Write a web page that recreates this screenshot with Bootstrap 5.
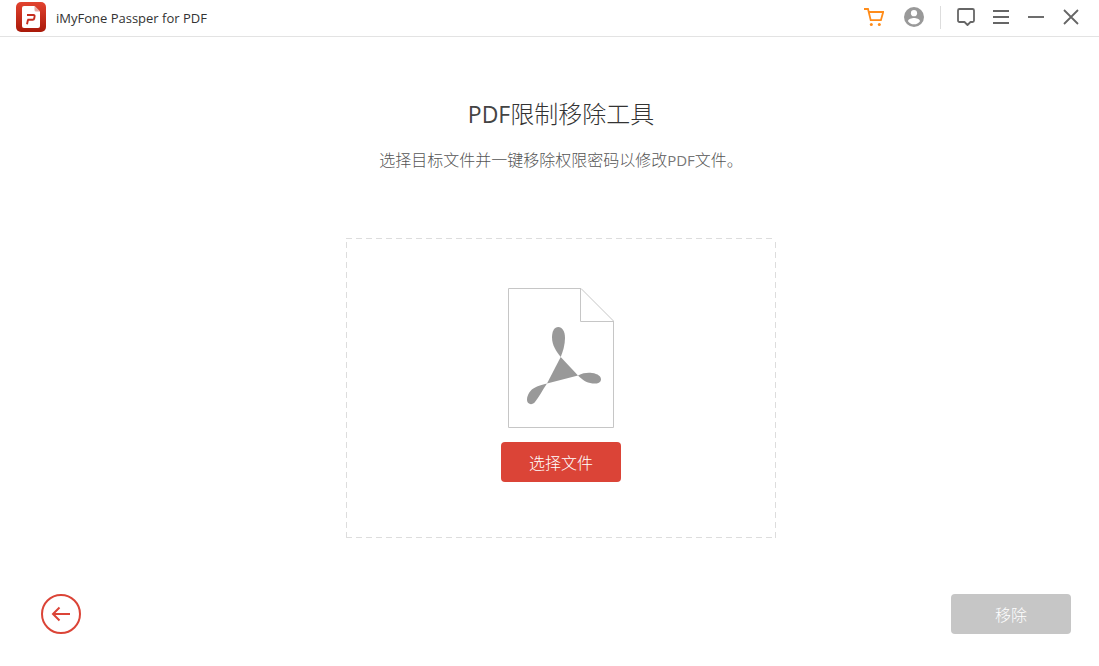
<!DOCTYPE html>
<html lang="zh-CN">
<head>
<meta charset="utf-8">
<meta name="viewport" content="width=device-width, initial-scale=1">
<title>iMyFone Passper for PDF</title>
<link href="https://cdn.jsdelivr.net/npm/bootstrap@5.3.0/dist/css/bootstrap.min.css" rel="stylesheet">
<style>
  body { font-family: "Open Sans", "Noto Sans CJK SC", sans-serif; color: #333; background: #fff; }
  .title-bar { border-bottom: 1px solid #e3e3e3; padding: 2px 18px 4px 16px; }
  .app-name { font-size: 13px; line-height: 20px; margin-left: 10px; padding-top: 2px; }
  .tool-btn { width: 20px; height: 20px; padding: 0; border: 0; display: flex; color: #666; }
  .window-tools { gap: 15px; }
  .account-tools { gap: 20px; margin-right: 16px; }
  .tool-divider { width: 1px; height: 23px; background: #ddd; margin-right: 15px; }
  .workspace { padding: 59px 0 0 23px; }
  .page-title { font-size: 24px; line-height: 36px; font-weight: 300; color: #333; }
  .page-title .latin { font-size: 23px; font-weight: 400; color: #444; }
  .page-note { font-size: 16px; line-height: 24px; font-weight: 300; color: #555; margin-top: 16px; }
  .page-note .latin { font-size: 15px; font-weight: 400; color: #777; }
  .drop-zone {
    --dash: #ddd 0 6px, transparent 6px 10px;
    width: 430px; max-width: 100%; min-height: 300px; padding: 50px 16px; margin-top: 66px;
    background:
      repeating-linear-gradient(90deg, var(--dash)) 0 0 / 100% 1px no-repeat,
      repeating-linear-gradient(90deg, var(--dash)) 0 100% / 100% 1px no-repeat,
      repeating-linear-gradient(180deg, transparent 0 4px, #ddd 4px 10px) 0 0 / 1px 100% no-repeat,
      repeating-linear-gradient(180deg, transparent 0 4px, #ddd 4px 10px) 100% 0 / 1px 100% no-repeat;
  }
  .action-btn {
    width: 120px; height: 40px; padding: 2px 0 0; border: 0; border-radius: 4px;
    font-size: 16px; line-height: 38px; font-weight: 300; color: #fff;
    --bs-btn-color: #fff; --bs-btn-bg: #db4437; --bs-btn-hover-color: #fff; --bs-btn-hover-bg: #c93a2e;
    --bs-btn-disabled-color: #fff; --bs-btn-disabled-bg: #c6c6c6; --bs-btn-disabled-opacity: 1;
  }
  .choose-btn { margin-top: 14px; }
  .back-btn { width: 40px; height: 40px; padding: 0; border: 0; display: flex; }
  .bottom-bar { padding: 16px 28px 32px 41px; }
</style>
</head>
<body class="d-flex flex-column min-vh-100">
<header class="title-bar d-flex align-items-center">
  <svg width="30" height="30" viewBox="0 0 30 30" aria-hidden="true">
    <defs><linearGradient id="logoRed" x1="0" y1="0" x2="0" y2="1"><stop offset="0" stop-color="#e2432f"/><stop offset="1" stop-color="#a91909"/></linearGradient></defs>
    <rect width="30" height="30" rx="5" fill="url(#logoRed)"/>
    <path d="M8 4h10.500L24 9.500V24a2 2 0 0 1-2 2H8a2 2 0 0 1-2-2V6a2 2 0 0 1 2-2z" fill="#fff"/>
    <path d="M18.500 4L24 9.500h-4a1.500 1.500 0 0 1-1.500-1.500z" fill="#e9a79f"/>
    <path d="M11 13h6.500q1.300 0 1.100 1.300l-.4 2.200q-.2 1.200-1.500 1.200H11.500M12 17.700l-1 4.500" fill="none" stroke="#c52c1d" stroke-width="1.900"/>
  </svg>
  <span class="app-name me-auto">iMyFone Passper for PDF</span>
  <div class="account-tools d-flex">
    <button type="button" class="btn tool-btn" aria-label="购物车">
      <svg width="20" height="20" viewBox="0 0 20 20" fill="none" stroke="#ff8c1a" stroke-width="1.800"><path d="M0 2h4l2.700 11.200h10.200L19.200 5H5"/><circle cx="7.300" cy="17.500" r="1.500" fill="#ff8c1a" stroke="none"/><circle cx="15.300" cy="17.500" r="1.500" fill="#ff8c1a" stroke="none"/></svg>
    </button>
    <button type="button" class="btn tool-btn" aria-label="账户">
      <svg width="20" height="20" viewBox="0 0 20 20"><circle cx="10" cy="10" r="10" fill="#999"/><circle cx="10" cy="6.200" r="3.100" fill="#fff"/><path d="M4 14.200c0-2.200 3.800-3.300 6-3.300s6 1.100 6 3.300c-1.300 1.900-3.500 3.100-6 3.100s-4.700-1.200-6-3.100z" fill="#fff"/></svg>
    </button>
  </div>
  <span class="tool-divider"></span>
  <div class="window-tools d-flex">
    <button type="button" class="btn tool-btn" aria-label="反馈">
      <svg width="20" height="20" viewBox="0 0 20 20" fill="none" stroke="currentColor" stroke-width="1.800" stroke-linejoin="round"><path d="M3.500 2h13A1.500 1.500 0 0 1 18 3.500v10a1.500 1.500 0 0 1-1.500 1.500H14.500L11.500 18L8.500 15H3.500A1.500 1.500 0 0 1 2 13.500v-10A1.500 1.500 0 0 1 3.500 2z"/></svg>
    </button>
    <button type="button" class="btn tool-btn" aria-label="菜单">
      <svg width="20" height="20" viewBox="0 0 20 20" fill="none" stroke="currentColor" stroke-width="1.900"><path d="M2 4h16M2 10h16M2 16h16"/></svg>
    </button>
    <button type="button" class="btn tool-btn" aria-label="最小化">
      <svg width="20" height="20" viewBox="0 0 20 20" fill="none" stroke="currentColor" stroke-width="1.900"><path d="M2 10h16"/></svg>
    </button>
    <button type="button" class="btn tool-btn" aria-label="关闭">
      <svg width="20" height="20" viewBox="0 0 20 20" fill="none" stroke="currentColor" stroke-width="1.800"><path d="M3 3l14 14M17 3L3 17"/></svg>
    </button>
  </div>
</header>

<main class="workspace flex-grow-1 d-flex flex-column align-items-center text-center">
  <h1 class="page-title mb-0"><span class="latin">PDF</span>限制移除工具</h1>
  <p class="page-note mb-0">选择目标文件并一键移除权限密码以修改<span class="latin">PDF</span>文件。</p>
  <section class="drop-zone d-flex flex-column align-items-center">
    <svg width="106" height="140" viewBox="0 0 106 140" aria-hidden="true">
      <path d="M.5.5H73L105.500 33v106.500H.5zM72.500.5v33h33" fill="none" stroke="#c6c6c6"/>
      <g fill="#999">
        <path d="M52.700 69L70 87.500 39 95.500z"/>
        <path d="M52.700 69C48 63 44 57 44 49.500C44 43 46.500 39 50.300 39S57 43 57 50C57 57 55 63 52.700 69z"/>
        <path d="M70 87.500C75 84.800 80 84.500 84 85C90 85.700 93.200 88.500 93 91.500C92.700 95 89 96 84.500 95.500C78 94.800 74 91.500 70 87.500z"/>
        <path d="M39 95.500C34 103 31 109 27 114C25 116.500 22 116.800 20.200 115C18 112.500 19 107 22.500 103C26 99 31 97.500 39 95.500z"/>
      </g>
    </svg>
    <button type="button" class="btn action-btn choose-btn">选择文件</button>
  </section>
</main>

<footer class="bottom-bar d-flex justify-content-between align-items-center">
  <button type="button" class="btn back-btn" aria-label="返回">
    <svg width="40" height="40" viewBox="0 0 40 40" fill="none" stroke="#db4437" stroke-width="2"><circle cx="20" cy="20" r="19"/><path d="M29 20H12.500M18.500 13.500L12 20l6.500 6.500"/></svg>
  </button>
  <button type="button" class="btn action-btn" disabled>移除</button>
</footer>
<script src="https://cdn.jsdelivr.net/npm/bootstrap@5.3.0/dist/js/bootstrap.bundle.min.js"></script>
</body>
</html>
